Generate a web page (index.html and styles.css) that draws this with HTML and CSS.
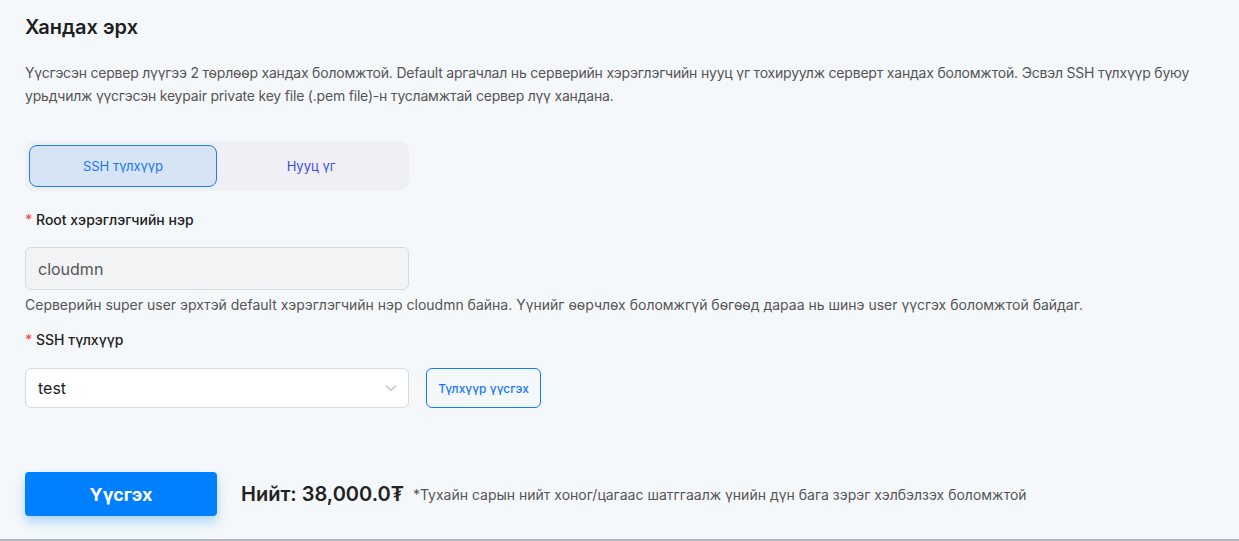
FILE: index.html
```html
<!DOCTYPE html>
<html lang="mn">
<head>
<meta charset="utf-8">
<title>Хандах эрх</title>
<link rel="stylesheet" href="styles.css">
</head>
<body>
<div class="page">
  <h2 class="title">Хандах эрх</h2>
  <p class="desc">Үүсгэсэн сервер лүүгээ 2 төрлөөр хандах боломжтой. Default аргачлал нь серверийн хэрэглэгчийн нууц үг тохируулж серверт хандах боломжтой. Эсвэл SSH түлхүүр буюу урьдчилж үүсгэсэн keypair private key file (.pem file)-н тусламжтай сервер лүү хандана.</p>

  <div class="tabs">
    <button class="tab active">SSH түлхүүр</button>
    <button class="tab">Нууц үг</button>
  </div>

  <div class="label"><span class="req">*</span> Root хэрэглэгчийн нэр</div>
  <div class="input disabled">cloudmn</div>
  <div class="help">Серверийн super user эрхтэй default хэрэглэгчийн нэр cloudmn байна. Үүнийг өөрчлөх боломжгүй бөгөөд дараа нь шинэ user үүсгэх боломжтой байдаг.</div>

  <div class="label label2"><span class="req">*</span> SSH түлхүүр</div>
  <div class="row">
    <div class="input select">
      <span>test</span>
      <svg class="chev" width="12" height="8" viewBox="0 0 12 8"><path d="M1 1.5 L6 6.5 L11 1.5" fill="none" stroke="#bfbfbf" stroke-width="1.2"/></svg>
    </div>
    <button class="btn-outline">Түлхүүр үүсгэх</button>
  </div>

  <div class="footer">
    <button class="btn-primary">Үүсгэх</button>
    <span class="total">Нийт: 38,000.0₮</span>
    <span class="note">*Тухайн сарын нийт хоног/цагаас шатггаалж үнийн дүн бага зэрэг хэлбэлзэх боломжтой</span>
  </div>
</div>
</body>
</html>
```

FILE: styles.css
```css
* { box-sizing: border-box; }
html, body {
  margin: 0;
  padding: 0;
  height: 100%;
}
body {
  background: #f5f8fb;
  font-family: Inter, "Noto Sans", sans-serif;
  color: #222;
  overflow: hidden;
}
.page {
  height: 541px;
  padding: 13px 20px 0 25px;
  border-bottom: 2px solid #b3bac4;
}
.title {
  margin: 0;
  font-size: 20px;
  font-weight: 600;
  line-height: 28px;
  color: #1f1f1f;
}
.desc {
  margin: 20px 0 0 0;
  font-size: 14px;
  line-height: 23px;
  letter-spacing: -0.2px;
  color: #555;
}
.tabs {
  margin-top: 34px;
  width: 384px;
  height: 50px;
  background: #f0eff5;
  border-radius: 10px;
  padding: 4px;
  display: flex;
}
.tab {
  flex: 1;
  border: 1px solid transparent;
  background: transparent;
  border-radius: 8px;
  font-family: inherit;
  font-size: 13px;
  color: #3b4cf0;
  cursor: pointer;
}
.tab.active {
  background: #d6e4f5;
  border-color: #1a7ff0;
  color: #1677ff;
}
.label {
  margin-top: 20px;
  font-size: 14px;
  font-weight: 500;
  line-height: 18px;
  color: #222;
}
.req { color: #ff4d4f; }
.input {
  width: 384px;
  height: 43px;
  border: 1px solid #d9d9d9;
  border-radius: 6px;
  padding: 0 12px;
  display: flex;
  align-items: center;
  font-size: 16px;
}
.label + .input { margin-top: 18px; }
.disabled {
  background: #f2f3f5;
  color: #555;
}
.help {
  margin-top: 5px;
  font-size: 14px;
  line-height: 20px;
  color: #555;
}
.label2 { margin-top: 16px; }
.row {
  margin-top: 19px;
  display: flex;
  gap: 17px;
}
.select {
  height: 40px;
  background: #fff;
  color: #222;
  justify-content: space-between;
}
.chev { margin-right: -1px; }
.btn-outline {
  width: 115px;
  height: 40px;
  border: 1px solid #1677ff;
  border-radius: 6px;
  background: transparent;
  color: #1677ff;
  font-family: inherit;
  font-size: 12px;
  font-weight: 500;
}
.footer {
  margin-top: 64px;
  display: flex;
  align-items: center;
}
.btn-primary {
  width: 192px;
  height: 44px;
  border: none;
  border-radius: 4px;
  background: #0080ff;
  color: #fff;
  font-family: inherit;
  font-size: 18px;
  font-weight: 700;
  box-shadow: 0 6px 12px rgba(0, 128, 255, 0.3);
}
.total {
  margin-left: 24px;
  font-size: 20px;
  font-weight: 600;
  color: #222;
}
.note {
  margin-left: 9px;
  font-size: 14px;
  color: #555;
}
```
